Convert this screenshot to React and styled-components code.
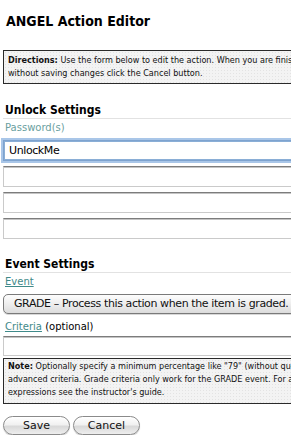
import styled, { createGlobalStyle } from "styled-components";

const GlobalStyle = createGlobalStyle`
  html, body {
    margin: 0;
    padding: 0;
    background: #ffffff;
    overflow: hidden;
  }
  body {
    font-family: "DejaVu Sans", Verdana, sans-serif;
    color: #000;
  }
`;

const App = () => {
  return (
    <Page>
      <GlobalStyle />
      <Title>ANGEL Action Editor</Title>

      <InfoBox $top={20}>
        <b>Directions:</b> Use the form below to edit the action. When you are
        finished click Save. To exit
        <br />
        without saving changes click the Cancel button.
      </InfoBox>

      <Section>
        <SectionTitle>Unlock Settings</SectionTitle>
        <Label>Password(s)</Label>
        <Fields>
          <TextField defaultValue="UnlockMe" $focused />
          <TextField />
          <TextField />
          <TextField />
        </Fields>
      </Section>

      <Section>
        <SectionTitle>Event Settings</SectionTitle>
        <Label>
          <LinkText href="#">Event</LinkText>
        </Label>
        <SelectBox>GRADE – Process this action when the item is graded.</SelectBox>
        <Label $top={6}>
          <LinkText href="#">Criteria</LinkText> <Plain>(optional)</Plain>
        </Label>
        <TextField $top={2} $height={20} />
        <InfoBox $top={2} $note>
          <b>Note:</b> Optionally specify a minimum percentage like "79" (without
          quotes) or use
          <br />
          advanced criteria. Grade criteria only work for the GRADE event. For a
          complete list of
          <br />
          expressions see the instructor's guide.
        </InfoBox>
      </Section>

      <Buttons>
        <PillButton>Save</PillButton>
        <PillButton>Cancel</PillButton>
      </Buttons>
    </Page>
  );
};

export default App;

const Page = styled.div`
  width: 400px;
  padding: 12px 0 0 3px;
  box-sizing: border-box;
`;

const Title = styled.h1`
  margin: 0 0 0 3px;
  font-family: "DejaVu Sans Condensed", "DejaVu Sans", sans-serif;
  font-size: 14px;
  line-height: 18px;
  font-weight: bold;
`;

const InfoBox = styled.div`
  margin-top: ${(p) => p.$top}px;
  border: 1px solid #2a2a2a;
  background-color: #f3f3f3;
  background-image: radial-gradient(#e3e3e3 0.6px, transparent 0.7px);
  background-size: 3px 3px;
  padding: ${(p) => (p.$note ? "1px 4px 4px 4px" : "3px 4px 3px 4px")};
  font-family: "DejaVu Sans Condensed", "DejaVu Sans", sans-serif;
  font-size: 9px;
  line-height: 13px;
  color: #111;
  white-space: nowrap;
  overflow: hidden;
`;

const Section = styled.div`
  margin-top: 18px;

  & + & {
    margin-top: 17px;
  }
`;

const SectionTitle = styled.h2`
  margin: 0;
  padding-left: 2px;
  font-family: "DejaVu Sans Condensed", "DejaVu Sans", sans-serif;
  font-size: 12px;
  line-height: 16px;
  font-weight: bold;
  border-bottom: 1px solid #e2e2e2;
`;

const Label = styled.div`
  margin-top: ${(p) => p.$top || 2}px;
  padding-left: 2px;
  font-size: 10px;
  line-height: 14px;
  color: #6aa0a0;
`;

const LinkText = styled.a`
  color: #3f8a8a;
  text-decoration: underline;
`;

const Plain = styled.span`
  color: #000;
`;

const Fields = styled.div`
  margin-top: 5px;
  display: flex;
  flex-direction: column;
  gap: 5px;
`;

const TextField = styled.input`
  display: block;
  box-sizing: border-box;
  width: 100%;
  height: ${(p) => p.$height || 21}px;
  margin: ${(p) => p.$top || 0}px 0 0 0;
  padding: 0 5px;
  font-family: "DejaVu Sans", Verdana, sans-serif;
  font-size: 11px;
  letter-spacing: -0.4px;
  color: #000;
  background: #fff;
  outline: none;
  border: 1px solid #cacaca;
  border-top-color: #7c7c7c;
  border-right: none;
  box-shadow: ${(p) =>
    p.$focused
      ? "0 0 0 2px #a9c6e8, inset 0 0 0 1px #8aaed6"
      : "inset 0 1px 0 #c4c4c4"};
  ${(p) => p.$focused && "border-color: #7ea3cf;"}
`;

const SelectBox = styled.div`
  margin-top: 5px;
  height: 20px;
  box-sizing: border-box;
  width: 300px;
  padding: 0 0 0 10px;
  border: 1px solid #7a7a7a;
  border-radius: 5px;
  background: linear-gradient(#fdfdfd, #ececec 55%, #dcdcdc);
  font-size: 11px;
  letter-spacing: -0.4px;
  line-height: 18px;
  color: #111;
  white-space: nowrap;
  overflow: hidden;
  box-shadow: 0 1px 0 #d8d8d8;
`;

const Buttons = styled.div`
  margin-top: 12px;
  display: flex;
  gap: 3px;
`;

const PillButton = styled.button`
  width: 67px;
  height: 19px;
  padding: 0;
  border: 1px solid #8a8a8a;
  border-radius: 10px;
  background: linear-gradient(#ffffff, #f1f1f1 45%, #d9d9d9 55%, #eeeeee);
  font-family: "DejaVu Sans", Verdana, sans-serif;
  font-size: 11px;
  color: #111;
  box-shadow: inset 0 1px 1px #ffffff, 0 1px 1px #cfcfcf;
`;
